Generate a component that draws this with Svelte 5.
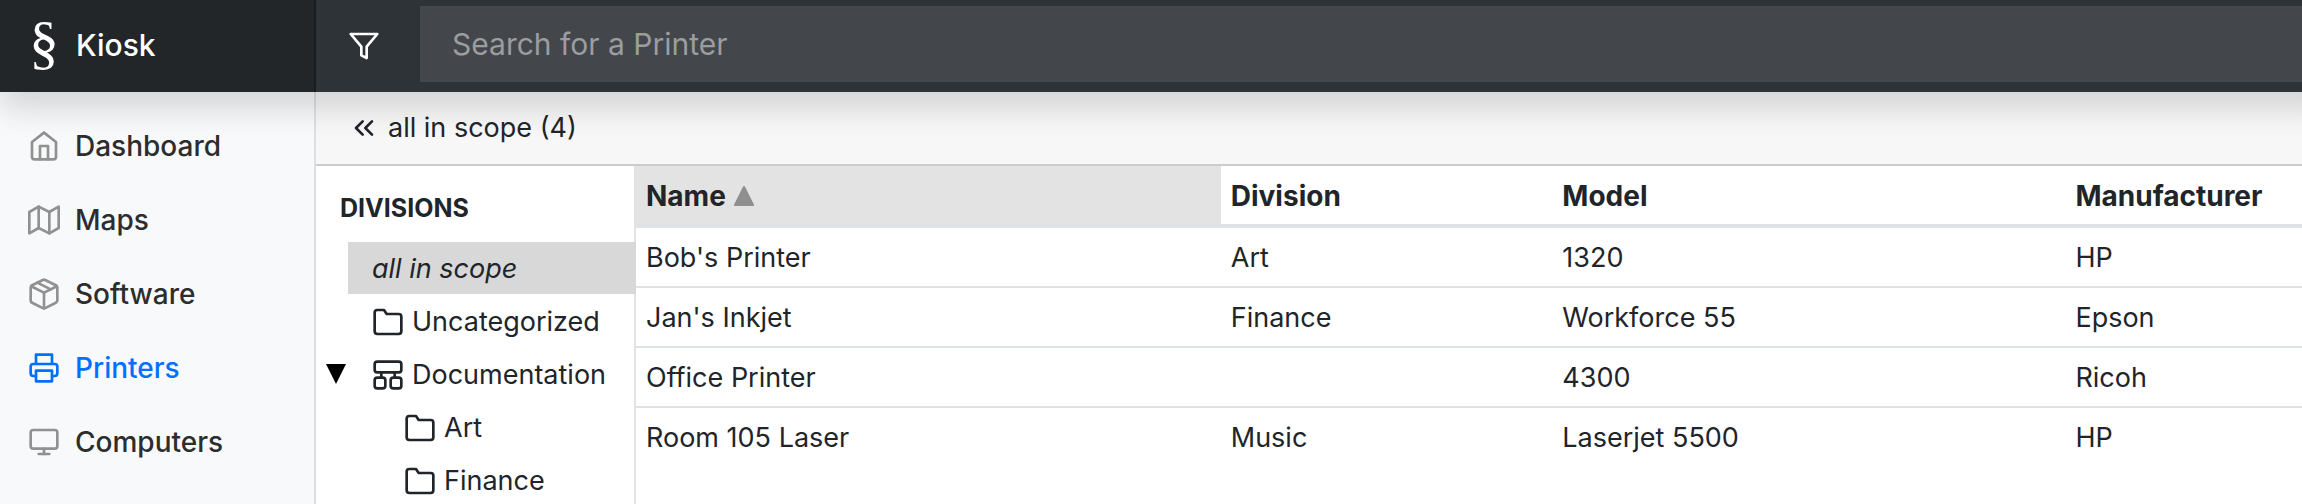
<script>
	const navItems = [
		{ id: 'dashboard', label: 'Dashboard' },
		{ id: 'maps', label: 'Maps' },
		{ id: 'software', label: 'Software' },
		{ id: 'printers', label: 'Printers' },
		{ id: 'computers', label: 'Computers' }
	];

	const columns = [
		{ key: 'name', label: 'Name' },
		{ key: 'division', label: 'Division' },
		{ key: 'model', label: 'Model' },
		{ key: 'manufacturer', label: 'Manufacturer' }
	];

	const printers = [
		{ name: "Bob's Printer", division: 'Art', model: '1320', manufacturer: 'HP' },
		{ name: "Jan's Inkjet", division: 'Finance', model: 'Workforce 55', manufacturer: 'Epson' },
		{ name: 'Office Printer', division: '', model: '4300', manufacturer: 'Ricoh' },
		{ name: 'Room 105 Laser', division: 'Music', model: 'Laserjet 5500', manufacturer: 'HP' }
	];

	let active = $state('printers');
	let open = $state(true);
	let ascending = $state(true);
	let query = $state('');

	let rows = $derived(
		printers
			.filter((p) => p.name.toLowerCase().includes(query.toLowerCase()))
			.sort((a, b) => (ascending ? 1 : -1) * a.name.localeCompare(b.name))
	);
</script>

{#snippet folder()}
	<svg class="icon" viewBox="0 0 24 24" aria-hidden="true">
		<path d="M22 19a2 2 0 0 1-2 2H4a2 2 0 0 1-2-2V5a2 2 0 0 1 2-2h5l2 3h9a2 2 0 0 1 2 2z" />
	</svg>
{/snippet}

<header class="topbar">
	<a class="brand" href="#home"><span class="mark">§</span>Kiosk</a>
	<button class="filter" aria-label="Filter">
		<svg class="icon" viewBox="0 0 24 24" aria-hidden="true">
			<polygon points="22 3 2 3 10 12.46 10 19 14 21 14 12.46 22 3" />
		</svg>
	</button>
	<input
		class="search"
		type="text"
		placeholder="Search for a Printer"
		aria-label="Search for a Printer"
		bind:value={query}
	/>
</header>

<div class="layout">
	<nav class="sidebar">
		{#each navItems as item (item.id)}
			<a
				href="#{item.id}"
				class="nav-link"
				class:active={active === item.id}
				onclick={() => (active = item.id)}
			>
				<svg class="icon" viewBox="0 0 24 24" aria-hidden="true">
					{#if item.id === 'dashboard'}
						<path d="M3 9l9-7 9 7v11a2 2 0 0 1-2 2H5a2 2 0 0 1-2-2z" />
						<polyline points="9 22 9 12 15 12 15 22" />
					{:else if item.id === 'maps'}
						<polygon points="1 6 1 22 8 18 16 22 23 18 23 2 16 6 8 2 1 6" />
						<line x1="8" y1="2" x2="8" y2="18" />
						<line x1="16" y1="6" x2="16" y2="22" />
					{:else if item.id === 'software'}
						<path
							d="M12.89 1.45l8 4A2 2 0 0 1 22 7.24v9.53a2 2 0 0 1-1.11 1.79l-8 4a2 2 0 0 1-1.79 0l-8-4a2 2 0 0 1-1.1-1.8V7.24a2 2 0 0 1 1.11-1.79l8-4a2 2 0 0 1 1.78 0z"
						/>
						<polyline points="2.32 6.16 12 11 21.68 6.16" />
						<line x1="12" y1="22.76" x2="12" y2="11" />
						<line x1="7" y1="3.5" x2="17" y2="8.5" />
					{:else if item.id === 'printers'}
						<polyline points="6 9 6 2 18 2 18 9" />
						<path d="M6 18H4a2 2 0 0 1-2-2v-5a2 2 0 0 1 2-2h16a2 2 0 0 1 2 2v5a2 2 0 0 1-2 2h-2" />
						<rect x="6" y="14" width="12" height="8" />
					{:else}
						<rect x="2" y="3" width="20" height="14" rx="2" />
						<line x1="8" y1="21" x2="16" y2="21" />
						<line x1="12" y1="17" x2="12" y2="21" />
					{/if}
				</svg>
				{item.label}
			</a>
		{/each}
	</nav>

	<main class="content">
		<div class="scope-bar">
			<button class="scope">
				<svg class="icon" viewBox="0 0 24 24" aria-hidden="true">
					<polyline points="11 17 6 12 11 7" />
					<polyline points="18 17 13 12 18 7" />
				</svg>
				all in scope (4)
			</button>
		</div>

		<div class="panes">
			<aside class="divisions">
				<h2>DIVISIONS</h2>
				<ul class="tree">
					<li><a class="node selected" href="#all">all in scope</a></li>
					<li><a class="node" href="#uncategorized">{@render folder()}Uncategorized</a></li>
					<li class="parent">
						<button class="toggle" aria-label="Toggle Documentation" onclick={() => (open = !open)}>
							<svg class="arrow" class:closed={!open} viewBox="0 0 20 20" aria-hidden="true">
								<polygon points="0 0 20 0 10 20" />
							</svg>
						</button>
						<a class="node" href="#documentation">
							<svg class="icon" viewBox="0 0 24 24" aria-hidden="true">
								<rect x="2" y="2" width="20" height="8" rx="2" />
								<rect x="2" y="14" width="8" height="8" rx="2" />
								<rect x="14" y="14" width="8" height="8" rx="2" />
								<path d="M7 10v4M17 10v4" />
							</svg>
							Documentation
						</a>
					</li>
					{#if open}
						<li><a class="node child" href="#art">{@render folder()}Art</a></li>
						<li><a class="node child" href="#finance">{@render folder()}Finance</a></li>
					{/if}
				</ul>
			</aside>

			<table class="printers">
				<thead>
					<tr>
						{#each columns as column (column.key)}
							<th class={column.key} scope="col">
								{#if column.key === 'name'}
									<button class="sort" onclick={() => (ascending = !ascending)}>
										{column.label}
										<svg class="sort-arrow" class:desc={!ascending} viewBox="0 0 20 20" aria-hidden="true">
											<polygon points="10 1 19 19 1 19" />
										</svg>
									</button>
								{:else}
									{column.label}
								{/if}
							</th>
						{/each}
					</tr>
				</thead>
				<tbody>
					{#each rows as printer (printer.name)}
						<tr>
							{#each columns as column (column.key)}
								<td>{printer[column.key]}</td>
							{/each}
						</tr>
					{/each}
				</tbody>
			</table>
		</div>
	</main>
</div>

<style>
	:global(body) {
		background: #fff;
		color: #212529;
		font-family: Inter, 'Liberation Sans', sans-serif;
		font-size: 27px;
		line-height: 40px;
	}

	:global(#app) {
		display: flex;
		flex-direction: column;
		min-height: 100vh;
		overflow-x: clip;
	}

	a {
		color: inherit;
		text-decoration: none;
	}

	button {
		padding: 0;
		border: 0;
		background: none;
		color: inherit;
		font: inherit;
		cursor: pointer;
	}

	.icon {
		flex: none;
		width: 32px;
		height: 32px;
		fill: none;
		stroke: currentColor;
		stroke-width: 2;
		stroke-linecap: round;
		stroke-linejoin: round;
	}

	/* top bar, runs past the right edge so its shadow doesn't fade there */
	.topbar {
		position: relative;
		z-index: 1;
		display: flex;
		height: 92px;
		margin-right: -32px;
		background: #2e3337;
		color: #fff;
		box-shadow: 0 16px 32px rgba(0, 0, 0, 0.15);
	}

	.brand {
		box-sizing: border-box;
		display: flex;
		align-items: center;
		gap: 16px;
		width: 316px;
		padding: 0 0 2px 28px;
		background: rgba(0, 0, 0, 0.25);
		box-shadow: inset -2px 0 0 rgba(0, 0, 0, 0.25);
		font-size: 30px;
		font-weight: 500;
	}

	.mark {
		width: 32px;
		padding-bottom: 6px;
		font-family: 'Liberation Serif', serif;
		font-size: 60px;
		font-weight: 400;
		text-align: center;
	}

	.filter {
		display: flex;
		align-items: center;
		padding: 0 40px 0 32px;
	}

	.search {
		flex: 1;
		min-width: 0;
		margin: 6px 0 10px;
		padding: 0 32px;
		border: 0;
		border-radius: 0;
		background: rgba(255, 255, 255, 0.1);
		color: #fff;
		font: inherit;
		font-size: 30px;
	}

	.search::placeholder {
		color: #9b9d9f;
	}

	/* layout */
	.layout {
		display: flex;
		flex: 1;
	}

	.sidebar {
		box-sizing: border-box;
		flex: none;
		width: 316px;
		padding-top: 17px;
		background: #f8f9fa;
		box-shadow: inset -2px 0 0 rgba(0, 0, 0, 0.1);
	}

	.nav-link {
		display: flex;
		align-items: center;
		gap: 15px;
		height: 74px;
		padding-left: 28px;
		color: #2d2d2d;
		font-size: 28px;
		font-weight: 500;
	}

	.nav-link .icon {
		color: #919191;
	}

	.nav-link.active,
	.nav-link.active .icon {
		color: #0070ff;
	}

	.content {
		display: flex;
		flex: 1;
		flex-direction: column;
		min-width: 0;
	}

	.scope-bar {
		display: flex;
		height: 72px;
		padding-left: 32px;
		border-bottom: 2px solid #ccc;
		background: #f7f7f7;
	}

	.scope {
		display: flex;
		align-items: center;
		gap: 8px;
	}

	.panes {
		display: flex;
		flex: 1;
	}

	/* divisions tree */
	.divisions {
		box-sizing: border-box;
		flex: none;
		width: 320px;
		background: linear-gradient(#e1e3e5, #e1e3e5) right / 2px 100% no-repeat;
	}

	h2 {
		margin: 0;
		padding: 22px 24px 14px;
		font-size: 25px;
		font-weight: 700;
		line-height: 40px;
	}

	.tree {
		display: grid;
		gap: 1px;
		margin: 0;
		padding: 0 0 0 32px;
		list-style: none;
	}

	.parent {
		display: flex;
		margin-left: -22px;
	}

	.toggle {
		display: flex;
		align-items: center;
		width: 22px;
	}

	.arrow {
		width: 20px;
		height: 20px;
		fill: #000;
	}

	.arrow.closed {
		rotate: -90deg;
	}

	.node {
		box-sizing: border-box;
		display: flex;
		align-items: center;
		gap: 8px;
		height: 52px;
		padding: 2px 0 0 24px;
	}

	.node.selected {
		background: #d8d8d8;
		font-style: italic;
	}

	.node.child {
		padding-left: 56px;
	}

	/* printers table */
	.printers {
		flex: 1;
		align-self: flex-start;
		table-layout: fixed;
		border-collapse: separate;
		border-spacing: 0;
	}

	th,
	td {
		height: 40px;
		padding: 10px 10px 8px;
		text-align: left;
	}

	th {
		border-bottom: 4px solid #dee2e6;
		font-size: 28px;
		font-weight: 700;
	}

	tbody tr + tr td {
		border-top: 2px solid #dee2e6;
	}

	.name {
		width: 35.1%;
		background: #e3e3e3;
		background-clip: padding-box;
	}

	.division {
		width: 19.9%;
	}

	.model {
		width: 30.8%;
	}

	.sort {
		display: flex;
		align-items: center;
		gap: 8px;
	}

	.sort-arrow {
		width: 20px;
		height: 20px;
		fill: #8f8f8f;
		stroke: #8f8f8f;
		stroke-width: 2;
		stroke-linejoin: round;
	}

	.sort-arrow.desc {
		rotate: 180deg;
	}
</style>
